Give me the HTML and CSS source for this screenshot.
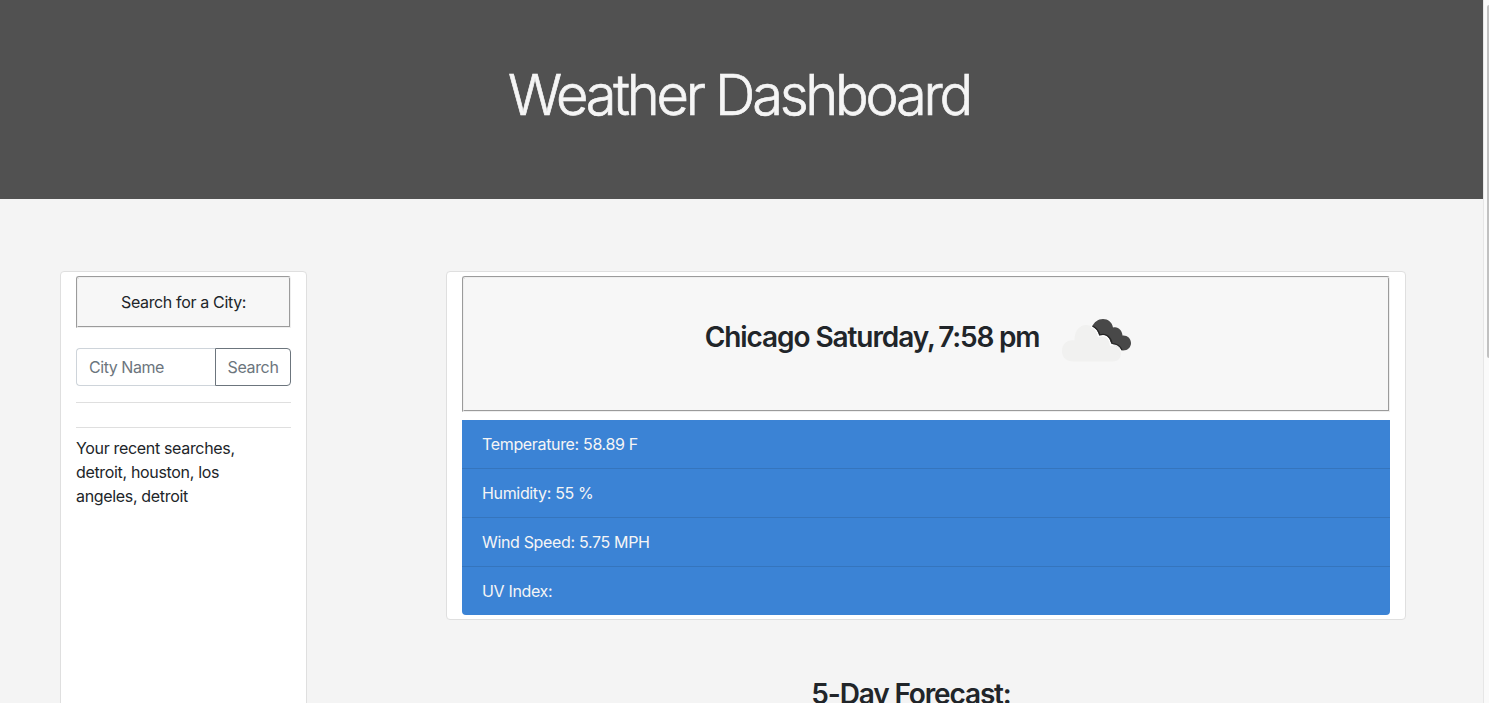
FILE: index.html
```html
<!DOCTYPE html>
<html lang="en">
<head>
<meta charset="utf-8">
<title>Weather Dashboard</title>
<link rel="stylesheet" href="styles.css">
</head>
<body>
<div class="page">
  <header class="hero"><h1 class="hero-title">Weather Dashboard</h1></header>
  <main class="content">
    <aside class="card sidebar">
      <div class="card-header search-title"><span>Search for a City:</span></div>
      <form class="search">
        <input class="search-input" type="text" placeholder="City Name">
        <button class="search-button" type="button">Search</button>
      </form>
      <hr class="rule">
      <hr class="rule rule-second">
      <p class="recent">Your recent searches,<br>detroit, houston, los<br>angeles, detroit</p>
    </aside>
    <section class="main">
      <div class="card current">
        <div class="card-header current-header">
          <h3 class="heading current-title">Chicago Saturday, <span class="time">7:58 pm</span></h3>
          <svg class="weather-icon" width="70" height="44" viewBox="0 0 70 44">
            <path fill="#484848" d="M30 8C32 3 36 0 41 0C46 0 50 3 51 8.500C56 7 60 11 60.500 16.500C65 16 69 19 69 24C69 28 66 31.500 61 31.500C57 31.500 55 30 53 27L48 23C47 17 43 15 37 16.500C36 13 34 10 30 8Z"/>
            <path fill="#f1f1f0" d="M11 42.500C4 42.500 0 38 0 32C0 25 5 20.500 12.500 21.500C12 13 17 6 24 6C30 6 35 10 36.500 17.500C43 15 48 19 48.500 26C55 26 59 29 59 34C59 39 56 42.500 50 42.500Z"/>
            <path fill="none" stroke="#fff" stroke-width="1.300" d="M29 7.500C33 9 35.500 13 36.500 17.500C43 15 48 19 48.500 26C54 25.500 58 28 59 32"/>
            <path fill="none" stroke="#252525" stroke-width="1.200" d="M30.500 7C34.500 9 37 12 37.800 16C44 14 49 18 50 24.500C54 24.500 58 26.500 60 31"/>
          </svg>
        </div>
        <ul class="stats">
          <li class="stat"><span class="temperature">Temperature: 58.89 F</span></li>
          <li class="stat"><span class="humidity">Humidity: 55 %</span></li>
          <li class="stat"><span class="wind">Wind Speed: 5.75 MPH</span></li>
          <li class="stat"><span class="uv">UV Index:</span></li>
        </ul>
      </div>
      <h3 class="heading forecast">5-Day Forecast:</h3>
    </section>
  </main>
</div>
<div class="scrollbar"><div class="thumb"></div></div>
</body>
</html>
```
FILE: styles.css
```css
* { box-sizing: border-box; }
body {
  margin: 0;
  height: 703px;
  display: flex;
  overflow: hidden;
  background: #f4f4f4;
  color: #212529;
  font: 16px/24px Inter, "Liberation Sans", sans-serif;
}
.page { width: 1483px; height: 703px; overflow: hidden; flex: none; }
.hero { height: 199px; padding: 62px 5px 0 0; background: #515151; text-align: center; }
.hero-title {
  margin: 0;
  color: #f5f5f5;
  font-size: 56px;
  font-weight: 300;
  line-height: 67px;
  letter-spacing: -3.25px;
  -webkit-text-stroke: .7px #f5f5f5;
}
.content { display: flex; gap: 139px; padding: 72px 77px 0 60px; }
.card { background: #fff; border: 1px solid #dfdfdf; border-radius: 4px; padding: 4px 15px; }
.sidebar { width: 247px; height: 500px; flex: none; }
.main { width: 960px; flex: none; }
.card-header { background: #f7f7f7; border: 2px groove #efefef; border-radius: 3px 3px 0 0; }
.search-title { height: 52px; display: grid; place-items: center; letter-spacing: -.35px; }
.search { display: flex; margin: 20px 0 16px; height: 38px; }
.search-input {
  width: 139px;
  padding: 6px 12px;
  border: 1px solid #ced4da;
  border-right: 0;
  border-radius: 4px 0 0 4px;
  background: #fff;
  font: inherit;
  letter-spacing: -.45px;
}
.search-input::placeholder { color: #6c757d; opacity: 1; }
.search-button {
  flex: 1;
  padding: 0;
  border: 1px solid #6c757d;
  border-radius: 0 4px 4px 0;
  background: #fff;
  color: #6c757d;
  font: inherit;
  letter-spacing: -.35px;
}
.rule { margin: 0; border: 0; border-top: 1px solid #dfdfdf; }
.rule-second { margin-top: 24px; }
.recent { margin: 8px 0 0; letter-spacing: -.33px; white-space: nowrap; }
.current { height: 349px; }
.current-header {
  height: 136px;
  display: flex;
  justify-content: center;
  gap: 23px;
  padding: 41px 15px 0 0;
}
.heading { margin: 0; font-size: 28px; font-weight: 600; line-height: 34px; }
.current-title { margin-top: 1px; letter-spacing: -1.08px; }
.time { margin-left: -2px; letter-spacing: -1.2px; }
.weather-icon { display: block; overflow: visible; }
.stats { list-style: none; margin: 8px 0 0; padding: 0; border-radius: 0 0 4px 4px; overflow: hidden; }
.stat {
  height: 49px;
  padding: 12px 20px;
  background: #3b83d5;
  border-bottom: 1px solid #3575bd;
  color: #f5f5f5;
  letter-spacing: -.34px;
}
.stat:last-child { height: 48px; border-bottom: 0; }
.forecast { margin-top: 57px; padding-right: 30px; text-align: center; letter-spacing: -1.15px; }
.scrollbar { width: 6px; height: 703px; border-left: 1px solid #e6e6e6; background: #fafafa; padding-left: 3px; }
.thumb { height: 353px; margin-top: 5px; background: #c1c1c1; border-radius: 3px 0 0 3px; }
```
